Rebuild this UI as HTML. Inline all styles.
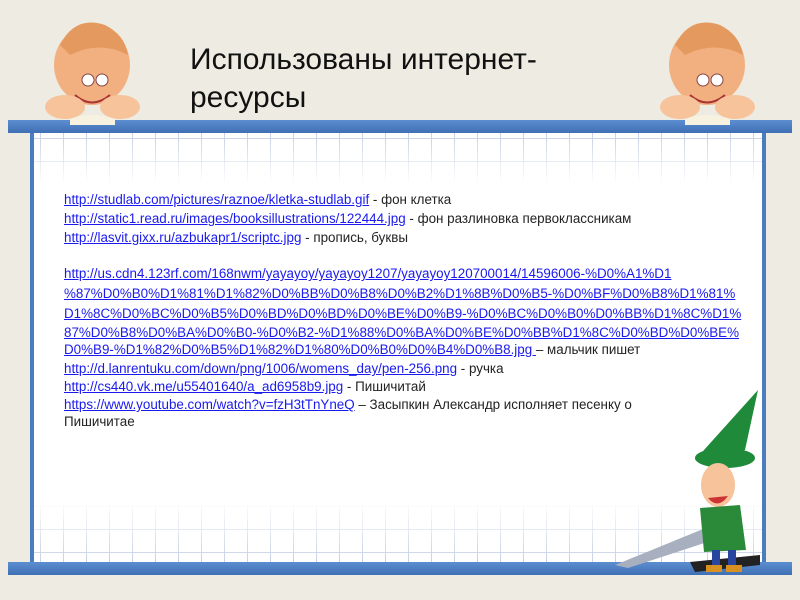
<!DOCTYPE html>
<html><head><meta charset="utf-8"><style>
body{margin:0;width:800px;height:600px;background:#edebe2;position:relative;overflow:hidden;font-family:"Liberation Sans",sans-serif}
.board{position:absolute;left:32px;top:130px;width:732px;height:436px;background-color:#fff;
background-image:linear-gradient(to bottom,rgba(255,255,255,0) 0,#fff 55px,#fff 370px,rgba(255,255,255,0) 436px),linear-gradient(to right,#c3cee2 1px,transparent 1px),linear-gradient(to bottom,#c3cee2 1px,transparent 1px);
background-size:100% 100%,23px 23px,23px 23px;background-position:0 0,8px 0,0 8px}
.vl{position:absolute;top:130px;width:4px;height:436px;background:#4a7cc0}
.bar{position:absolute;left:8px;width:784px;height:13px;background:linear-gradient(#5b8ed0,#3f6fb5)}
.t{position:absolute;left:190px;font-size:30px;color:#111;line-height:40px}
.l{position:absolute;left:64px;font-size:13.4px;white-space:nowrap;color:#222}
.l a{color:#1a1aee;text-decoration:underline}
</style></head><body>
<div class="board"></div>
<div class="vl" style="left:30px"></div><div class="vl" style="left:762px"></div>
<div class="bar" style="top:120px"></div>
<div class="bar" style="top:562px"></div>
<div class="t" style="top:40px">Использованы интернет-</div>
<div class="t" style="top:78px">ресурсы</div>

<svg style="position:absolute;left:30px;top:15px" width="120" height="112" viewBox="0 0 120 112">
<ellipse cx="62" cy="50" rx="38" ry="40" fill="#f2b080"/><path d="M30 30 Q45 0 75 10 Q95 20 98 40 Q70 25 40 40Z" fill="#e49a5e"/>
<circle cx="58" cy="65" r="6" fill="#fff" stroke="#844"/><circle cx="72" cy="65" r="6" fill="#fff" stroke="#844"/>
<path d="M45 80 Q62 95 80 80" stroke="#a33" fill="none" stroke-width="2"/>
<ellipse cx="35" cy="92" rx="20" ry="12" fill="#f6c39a"/><ellipse cx="90" cy="92" rx="20" ry="12" fill="#f6c39a"/>
<path d="M40 104 Q62 96 85 104 L85 110 L40 110Z" fill="#f7f1e0"/></svg>
<svg style="position:absolute;left:645px;top:15px" width="120" height="112" viewBox="0 0 120 112">
<ellipse cx="62" cy="50" rx="38" ry="40" fill="#f2b080"/><path d="M30 30 Q45 0 75 10 Q95 20 98 40 Q70 25 40 40Z" fill="#e49a5e"/>
<circle cx="58" cy="65" r="6" fill="#fff" stroke="#844"/><circle cx="72" cy="65" r="6" fill="#fff" stroke="#844"/>
<path d="M45 80 Q62 95 80 80" stroke="#a33" fill="none" stroke-width="2"/>
<ellipse cx="35" cy="92" rx="20" ry="12" fill="#f6c39a"/><ellipse cx="90" cy="92" rx="20" ry="12" fill="#f6c39a"/>
<path d="M40 104 Q62 96 85 104 L85 110 L40 110Z" fill="#f7f1e0"/></svg>

<svg style="position:absolute;left:600px;top:390px" width="170" height="185" viewBox="0 0 170 185">
<path d="M15 175 L125 130 L138 142 L28 178Z" fill="#a8b0c0"/><path d="M90 172 L160 165 L160 175 L95 182Z" fill="#222"/>
<path d="M95 70 L158 0 L145 60Z" fill="#1f8a3a"/><ellipse cx="125" cy="68" rx="30" ry="10" fill="#1f8a3a"/>
<ellipse cx="118" cy="95" rx="17" ry="22" fill="#f6c39a"/><path d="M108 108 Q118 120 128 106" fill="#c33"/>
<path d="M100 118 L140 115 L146 160 L104 162Z" fill="#2a8a3a"/>
<rect x="112" y="160" width="8" height="18" fill="#2846a0"/><rect x="128" y="160" width="8" height="18" fill="#2846a0"/>
<rect x="106" y="175" width="16" height="7" fill="#d89020"/><rect x="126" y="175" width="16" height="7" fill="#d89020"/>
</svg>

<div class="l" style="top:192px"><a>http://studlab.com/pictures/raznoe/kletka-studlab.gif</a> - фон клетка</div>
<div class="l" style="top:211px"><a>http://static1.read.ru/images/booksillustrations/122444.jpg</a> - фон разлиновка первоклассникам</div>
<div class="l" style="top:230px"><a>http://lasvit.gixx.ru/azbukapr1/scriptc.jpg</a> - пропись, буквы</div>
<div class="l" style="top:266px"><a>http://us.cdn4.123rf.com/168nwm/yayayoy/yayayoy1207/yayayoy120700014/14596006-%D0%A1%D1</a></div>
<div class="l" style="top:286px"><a>%87%D0%B0%D1%81%D1%82%D0%BB%D0%B8%D0%B2%D1%8B%D0%B5-%D0%BF%D0%B8%D1%81%</a></div>
<div class="l" style="top:306px"><a>D1%8C%D0%BC%D0%B5%D0%BD%D0%BD%D0%BE%D0%B9-%D0%BC%D0%B0%D0%BB%D1%8C%D1%</a></div>
<div class="l" style="top:325px"><a>87%D0%B8%D0%BA%D0%B0-%D0%B2-%D1%88%D0%BA%D0%BE%D0%BB%D1%8C%D0%BD%D0%BE%</a></div>
<div class="l" style="top:342px"><a>D0%B9-%D1%82%D0%B5%D1%82%D1%80%D0%B0%D0%B4%D0%B8.jpg </a>– мальчик пишет</div>
<div class="l" style="top:361px"><a>http://d.lanrentuku.com/down/png/1006/womens_day/pen-256.png</a> - ручка</div>
<div class="l" style="top:379px"><a>http://cs440.vk.me/u55401640/a_ad6958b9.jpg</a> - Пишичитай</div>
<div class="l" style="top:397px"><a>https://www.youtube.com/watch?v=fzH3tTnYneQ</a> – Засыпкин Александр исполняет песенку о</div>
<div class="l" style="top:414px">Пишичитае</div>
</body></html>
